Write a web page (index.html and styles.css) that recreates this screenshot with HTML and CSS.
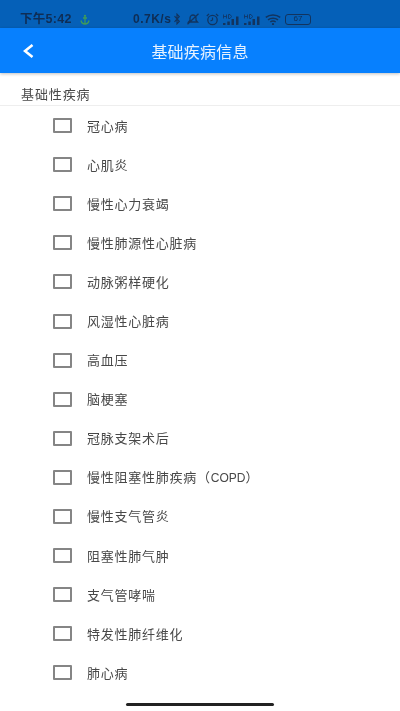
FILE: index.html
```html
<!DOCTYPE html>
<html lang="zh">
<head>
<meta charset="utf-8">
<title>基础疾病信息</title>
<link rel="stylesheet" href="styles.css">
</head>
<body>
<div class="app">
  <div class="status">
    <span class="time">下午5:42</span>
    <svg class="anchor" width="10" height="11" viewBox="0 0 10 11"><path d="M5 2.500V10M3 4h4M1 6.500C1.500 9 3.500 10 5 10s3.500-1 4-3.500" fill="none" stroke="#3f9a5a" stroke-width="1.300"/><circle cx="5" cy="1.800" r="1.100" fill="#3f9a5a"/></svg>
    <span class="speed">0.7K/s</span>
    <svg class="bt" width="6" height="12" viewBox="0 0 6 12"><path d="M.5 3.200 5.300 8.300 3 10.800V1.200L5.300 3.700.5 8.800" fill="none" stroke="#12345f" stroke-width="1.200"/></svg>
    <svg class="mute" width="14" height="12" viewBox="0 0 14 12"><path d="M2.500 9h9L10 7.300V5A3 3 0 0 0 4 5v2.300zM1.500 11.300 12.500.8" fill="none" stroke="#12345f" stroke-width="1.300"/></svg>
    <svg class="alarm" width="13" height="13" viewBox="0 0 13 13"><circle cx="6.500" cy="7" r="4.700" fill="none" stroke="#12345f" stroke-width="1.300"/><path d="M6.500 4.500V7l-2 1M.8 3 3 .8M12.200 3 10 .8" fill="none" stroke="#12345f" stroke-width="1.200"/></svg>
    <svg class="sig" width="16" height="11" viewBox="0 0 16 11"><path d="M0 11h2.500V9H0zM4.300 11h2.500V7.500H4.300zM8.500 11H11V5H8.500zM13 11h2.500V2.500H13z" fill="#12345f"/><path d="M.5.500v4M3.500.500v4M.5 2.500h3M5.500.500v4h1.500L8.500 2.500 7 .500z" fill="none" stroke="#12345f" stroke-width=".8"/></svg>
    <svg class="sig2" width="16" height="11" viewBox="0 0 16 11"><path d="M0 11h2.500V9H0zM4.300 11h2.500V7.500H4.300zM8.500 11H11V5H8.500zM13 11h2.500V2.500H13z" fill="#12345f"/><path d="M.5.500v4M3.500.500v4M.5 2.500h3M5.500.500v4h1.500L8.500 2.500 7 .500z" fill="none" stroke="#12345f" stroke-width=".8"/></svg>
    <svg class="wifi" width="16" height="11" viewBox="0 0 16 11"><path d="M.8 3.300c4-3.200 10.400-3.200 14.400 0M3 5.800c2.800-2.200 7.200-2.200 10 0M5.300 8c1.500-1 3.900-1 5.400 0" fill="none" stroke="#12345f" stroke-width="1.500"/><circle cx="8" cy="10" r="1.100" fill="#12345f"/></svg>
    <span class="battery"><span class="battery-level">67</span></span>
  </div>
  <header class="bar">
    <svg class="back" width="11" height="14" viewBox="0 0 11 14"><path d="M9.500 1 2 7l7.500 6" fill="none" stroke="#fff" stroke-width="2.600"/></svg>
    <h1 class="title">基础疾病信息</h1>
  </header>
  <div class="section">基础性疾病</div>
  <ul class="list">
    <li class="row"><span class="box"></span><span class="label">冠心病</span></li>
    <li class="row"><span class="box"></span><span class="label">心肌炎</span></li>
    <li class="row"><span class="box"></span><span class="label">慢性心力衰竭</span></li>
    <li class="row"><span class="box"></span><span class="label">慢性肺源性心脏病</span></li>
    <li class="row"><span class="box"></span><span class="label">动脉粥样硬化</span></li>
    <li class="row"><span class="box"></span><span class="label">风湿性心脏病</span></li>
    <li class="row"><span class="box"></span><span class="label">高血压</span></li>
    <li class="row"><span class="box"></span><span class="label">脑梗塞</span></li>
    <li class="row"><span class="box"></span><span class="label">冠脉支架术后</span></li>
    <li class="row"><span class="box"></span><span class="label">慢性阻塞性肺疾病（<span class="latin">COPD</span>）</span></li>
    <li class="row"><span class="box"></span><span class="label">慢性支气管炎</span></li>
    <li class="row"><span class="box"></span><span class="label">阻塞性肺气肿</span></li>
    <li class="row"><span class="box"></span><span class="label">支气管哮喘</span></li>
    <li class="row"><span class="box"></span><span class="label">特发性肺纤维化</span></li>
    <li class="row"><span class="box"></span><span class="label">肺心病</span></li>
  </ul>
  <div class="home"></div>
</div>
</body>
</html>
```
FILE: styles.css
```css
* { box-sizing: border-box; margin: 0; padding: 0; }
html, body { height: 100%; overflow: hidden; background: #fff; }
body { font-family: "Liberation Sans", "Noto Sans CJK SC", sans-serif; }
.app { position: relative; width: 400px; height: 711px; overflow: hidden; background: #fff; filter: blur(.4px); }
.status { height: 28px; background: #0560b8; display: flex; align-items: center; padding: 10px 0 0 20px; color: #0f2d55; font-size: 12.500px; line-height: 14px; font-weight: 700; }
.time { width: 52px; letter-spacing: .3px; white-space: nowrap; }
.anchor { margin-left: 8px; }
.speed { margin-left: 43px; width: 37px; font-size: 12px; letter-spacing: .5px; white-space: nowrap; }
.bt { margin-left: 4px; }
.mute { margin-left: 6px; }
.alarm { margin-left: 6px; }
.sig { margin-left: 4px; }
.sig2 { margin-left: 5px; }
.wifi { margin-left: 5px; }
.battery { width: 26px; height: 11px; margin-left: 4px; border: 1.300px solid #12345f; border-radius: 3px; display: flex; align-items: center; justify-content: center; }
.battery-level { font-size: 8px; font-weight: 400; line-height: 1; }
.bar { height: 45px; background: #0780fe; display: flex; align-items: center; justify-content: center; position: relative; box-shadow: 0 1px 3px rgba(0,0,0,.25); }
.back { position: absolute; left: 23px; top: 16px; }
.title { color: #e6f2ff; font-size: 16px; font-weight: 400; letter-spacing: .2px; }
.section { height: 33px; padding: 14px 0 0 21px; border-bottom: 1px solid #eeeeee; color: #484848; font-size: 13px; line-height: 16px; letter-spacing: .9px; }
.list { list-style: none; }
.row { height: 39.100px; display: flex; align-items: center; padding-left: 53px; }
.box { width: 19px; height: 15px; border: 2px solid #858585; border-radius: 1px; margin-right: 15px; }
.label { position: relative; top: 1px; color: #484848; font-size: 13px; letter-spacing: .75px; line-height: 16px; }
.latin { font-size: 12px; letter-spacing: 0; }
.home { position: absolute; left: 126px; top: 703px; width: 148px; height: 3px; border-radius: 2px; background: #222; }
```
